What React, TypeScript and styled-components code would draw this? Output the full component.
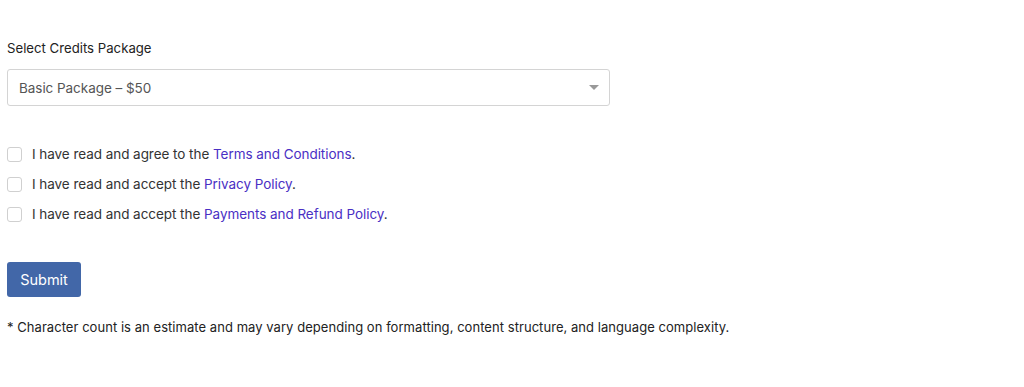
import styled, { createGlobalStyle } from 'styled-components';

const GlobalStyle = createGlobalStyle`
    html, body {
        margin: 0;
        padding: 0;
        background: #ffffff;
    }
    body {
        font-family: "Inter", "Open Sans", sans-serif;
        color: #222;
    }
`

const terms = [
    { lead: 'I have read and agree to the ', link: 'Terms and Conditions' },
    { lead: 'I have read and accept the ', link: 'Privacy Policy' },
    { lead: 'I have read and accept the ', link: 'Payments and Refund Policy' },
]

function App() {

    return (
        <Page>
            <GlobalStyle />
            <Label>Select Credits Package</Label>
            <SelectBox>
                <SelectText>Basic Package – $50</SelectText>
                <Caret />
            </SelectBox>

            <CheckList>
                {terms.map((t) => (
                    <CheckRow key={t.link}>
                        <Box />
                        <CheckText>
                            {t.lead}<Link href="#">{t.link}</Link>.
                        </CheckText>
                    </CheckRow>
                ))}
            </CheckList>

            <SubmitButton>Submit</SubmitButton>

            <Note>
                * Character count is an estimate and may vary depending on formatting, content structure, and language complexity.
            </Note>
        </Page>
    )
}

const Page = styled.div`
    width: 1024px;
    height: 387px;
    box-sizing: border-box;
    padding: 40px 7px 0 7px;
    display: flex;
    flex-direction: column;
    align-items: flex-start;
`

const Label = styled.div`
    font-size: 13.2px;
    line-height: 17px;
    color: #222;
`

const SelectBox = styled.div`
    margin-top: 12px;
    width: 603px;
    height: 37px;
    box-sizing: border-box;
    border: 1px solid #d4d4d4;
    border-radius: 3px;
    display: flex;
    align-items: center;
    justify-content: space-between;
    padding: 0 10px 0 11px;
`

const SelectText = styled.span`
    font-size: 13.5px;
    color: #555;
    letter-spacing: -0.05px;
`

const Caret = styled.span`
    width: 0;
    height: 0;
    border-left: 5px solid transparent;
    border-right: 5px solid transparent;
    border-top: 5px solid #999;
`

const CheckList = styled.div`
    margin-top: 39px;
    display: flex;
    flex-direction: column;
    gap: 12px;
`

const CheckRow = styled.label`
    display: flex;
    align-items: center;
    gap: 10px;
    height: 18px;
`

const Box = styled.span`
    width: 15px;
    height: 15px;
    box-sizing: border-box;
    border: 1px solid #d0d0d0;
    border-radius: 3px;
    background: #fff;
`

const CheckText = styled.span`
    font-size: 13.5px;
    color: #333;
    letter-spacing: -0.05px;
`

const Link = styled.a`
    color: #4a2fc4;
    text-decoration: none;
`

const SubmitButton = styled.button`
    margin-top: 39px;
    width: 74px;
    height: 35px;
    border: none;
    border-radius: 3px;
    background: #4267a8;
    color: #fff;
    font-family: "Inter", "Open Sans", sans-serif;
    font-size: 14.5px;
    padding: 0;
`

const Note = styled.p`
    margin: 22px 0 0 0;
    font-size: 13px;
    line-height: 17px;
    color: #222;
    letter-spacing: 0.05px;
`

export default App;
